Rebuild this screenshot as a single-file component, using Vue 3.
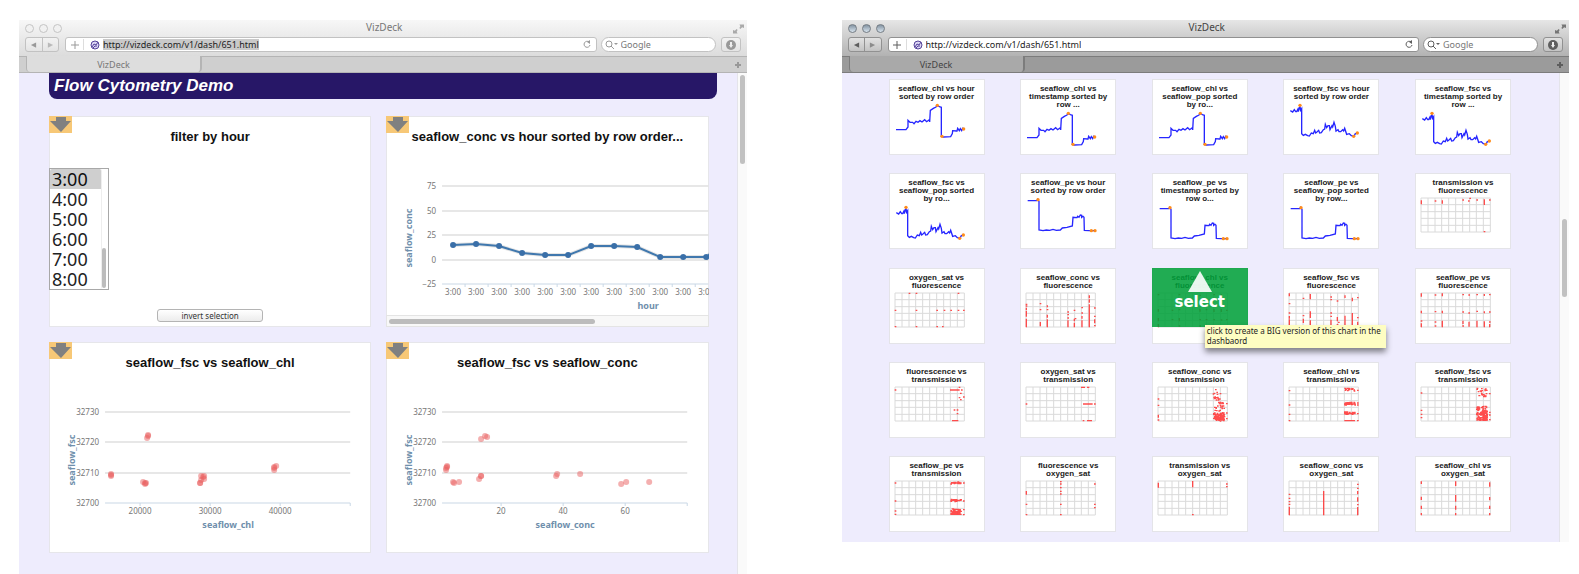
<script setup>
const url = 'http://vizdeck.com/v1/dash/651.html'
const windows = [
  { id: 'dash', focused: false },
  { id: 'gallery', focused: true },
]
const hours = ['3:00', '4:00', '5:00', '6:00', '7:00', '8:00']

const lineY = [89, 88, 90, 97, 99, 99, 90, 90, 91, 101, 101, 101]
const linePoints = lineY.map((y, i) => [67 + i * 23, y])
const linePath = linePoints.map((p) => p.join(',')).join(' ') + ' 326,96'
const lineTicks = [[75, 30], [50, 55], [25, 79], [0, 104], ['−25', 128]]

const scatterTicks = [[32730, 30], [32720, 60], [32710, 91], [32700, 121]]
const scatters = [
  {
    id: 'chl',
    x: 'seaflow_chl',
    ticks: [[91, '20000'], [161, '30000'], [231, '40000'], [301, '']],
    dots: [[99, 53], [99, 54], [98, 56], [62, 92], [62, 93], [62, 94], [94, 100], [97, 101], [96, 102], [96, 101], [151, 101], [151, 101], [152, 98], [152, 94], [155, 94], [154, 95], [155, 97], [225, 88], [225, 86], [225, 85], [227, 84]],
  },
  {
    id: 'conc',
    x: 'seaflow_conc',
    ticks: [[115, '20'], [177, '40'], [239, '60'], [301, '']],
    dots: [[95, 57], [99, 54], [101, 55], [61, 84], [61, 85], [60, 86], [60, 88], [67, 100], [68, 101], [73, 100], [93, 97], [95, 94], [95, 94], [170, 94], [171, 92], [194, 92], [235, 102], [240, 100], [263, 100]],
  },
]

const sparks = {
  chl: {
    line: '21,86 51,86 57,78 57,58 63,64 71,64 75,68 81,61 87,64 93,59 99,63 107,56 113,62 121,56 122,63 124,28 133,22 141,18 145,13 153,18 157,19 157,106 163,108 185,107 190,98 191,89 202,90 204,90 206,82 211,89 214,83 218,89 221,82 225,85',
    dots: [[145, 13], [159, 106], [224, 84]],
  },
  fsc: {
    line: '22,29 29,33 34,26 38,32 41,32 45,24 46,32 51,16 53,28 56,23 56,98 61,103 67,100 74,104 79,105 85,96 91,98 95,88 98,96 101,94 107,88 110,96 115,95 121,86 125,84 127,70 131,80 135,74 139,74 141,86 147,74 149,78 153,64 157,76 159,90 165,86 168,92 173,92 179,86 182,90 185,82 191,100 199,98 205,104 213,106 217,98 222,97',
    dots: [[51, 13], [212, 106], [223, 96]],
  },
  pe: {
    line: '23,17 51,17 53,13 57,19 57,105 69,107 79,105 89,106 99,103 109,106 121,105 127,99 141,97 157,93 159,67 171,68 173,64 177,67 181,60 185,61 185,67 189,64 192,67 193,106 207,107 225,107',
    dots: [[54, 14], [214, 107], [225, 107]],
  },
}

/* Deterministic scatter of short marks inside a box. */
function cloud(x0, x1, y0, y1, count, seed) {
  let s = seed
  const next = () => {
    s = (s * 16807) % 2147483647
    return s / 2147483647
  }
  let d = ''
  for (let i = 0; i < count; i++) {
    d += `M${Math.round(x0 + next() * (x1 - x0))} ${Math.round(y0 + next() * (y1 - y0))}h1`
  }
  return d
}

/* Each column is [x, y or [from, to], ...]. */
function marks(...columns) {
  return columns
    .map(([x, ...ys]) => ys.map((y) => (Array.isArray(y) ? `M${x} ${y[0]}V${y[1]}` : `M${x} ${y}h1`)).join(''))
    .join('')
}

const thumbs = [
  { title: 'seaflow_chl vs hour sorted by row order', spark: sparks.chl },
  { title: 'seaflow_chl vs timestamp sorted by row ...', spark: sparks.chl },
  { title: 'seaflow_chl vs seaflow_pop sorted by ro...', spark: sparks.chl },
  { title: 'seaflow_fsc vs hour sorted by row order', spark: sparks.fsc },
  { title: 'seaflow_fsc vs timestamp sorted by row ...', spark: sparks.fsc },
  { title: 'seaflow_fsc vs seaflow_pop sorted by ro...', spark: sparks.fsc },
  { title: 'seaflow_pe vs hour sorted by row order', spark: sparks.pe },
  { title: 'seaflow_pe vs timestamp sorted by row o...', spark: sparks.pe },
  { title: 'seaflow_pe vs seaflow_pop sorted by row...', spark: sparks.pe },
  { title: 'transmission vs fluorescence', marks: marks([1, [9, 17]], [43, 9], [64, [9, 15]], [126, 6], [143, 9], [147, 1], [168, 6], [190, [6, 19], 101], [206, 6]) },
  { title: 'oxygen_sat vs fluorescence', marks: marks([1, 52, 101], [43, 1], [64, 1, 52, 101], [126, 52, 101], [143, 101], [148, 52], [168, 52], [190, 1, 52], [206, 52]) },
  { title: 'seaflow_conc vs fluorescence', marks: marks([1, 34, 39, [46, 49], [55, 69], [79, 101]], [43, 32, 50, [89, 98]], [64, [39, 41], 50, [67, 72], [81, 101]], [126, 57, 65, 75, [84, 101]], [145, 52, [79, 83], [91, 101]], [148, 77], [168, 44, 60, [71, 75], [84, 101]], [190, [9, 14], [21, 27], [36, 101]], [206, 45, 70, [81, 89], 98]) },
  { title: 'seaflow_chl vs fluorescence', hover: true, marks: marks([1, 5, [50, 54], [77, 83], [95, 101]], [43, 52, 80], [64, 5, 50, [77, 83], 99], [126, 7, [50, 54], 80, 99], [145, 50, 80], [168, 5, [50, 55], 80, 99], [190, [5, 9], [50, 55], 81, 100], [206, 52, 80]) },
  { title: 'seaflow_fsc vs fluorescence', marks: marks([1, [3, 8], 32, 60, [71, 75], [81, 97]], [43, 16, 68, [79, 88]], [64, [5, 17], [57, 73], [84, 99]], [126, 12, 20, 60, 70, [82, 99]], [145, 24, [74, 83], 95], [149, 88], [168, [9, 13], [70, 99]], [190, [16, 23], [62, 99]], [206, 14, 74, [88, 94]]) },
  { title: 'seaflow_pe vs fluorescence', marks: marks([1, [3, 9], [55, 59], 84, [93, 101]], [43, 6, 56, 87, 99], [64, [3, 8], [55, 59], [85, 101]], [126, 5, 57, [85, 91], 99], [144, 6, 60, [88, 99]], [168, 5, 55, [85, 101]], [190, [5, 7], [57, 59], [87, 101]], [206, 5, 57, 87, [95, 101]]) },
  { title: 'fluorescence vs transmission', marks: marks([1, 9], [193, 1, 32], [197, 19, 38], [200, 9], [206, 30], [178, 69], [187, 69, 80]) + 'M167 9H192M173 101H188' },
  { title: 'oxygen_sat vs transmission', marks: marks([1, 51], [172, 101], [206, 51]) + 'M167 1H175M185 1H188M173 51H198M185 101H196' },
  { title: 'seaflow_conc vs transmission', marks: marks([1, 36, 55, [85, 90], 99], [206, 50, 78, 95]) + cloud(166, 190, 6, 40, 8, 11) + cloud(168, 198, 30, 80, 38, 23) + cloud(167, 199, 78, 102, 90, 5) },
  { title: 'seaflow_chl vs transmission', marks: marks([1, 11, 54, 82, 101], [206, 10, 48, 54, 80, 101]) + cloud(168, 198, 3, 13, 20, 8) + cloud(167, 198, 46, 55, 30, 4) + cloud(167, 198, 75, 82, 28, 3) + 'M168 51H196M168 80H198M168 101H196' },
  { title: 'seaflow_fsc vs transmission', marks: marks([1, 18, 70, 82, 92], [206, 20, 76, 84, 98]) + cloud(168, 200, 2, 30, 24, 9) + cloud(167, 198, 56, 100, 90, 12) + cloud(184, 198, 70, 101, 70, 32) },
  { title: 'seaflow_pe vs transmission', marks: marks([1, 6, 60, 90, 100], [206, 6, 60, 86, 101]) + cloud(168, 198, 3, 9, 24, 7) + cloud(168, 198, 55, 62, 20, 6) + cloud(168, 198, 84, 100, 60, 14) + 'M172 6H198M168 58H198M168 100H198' },
  { title: 'fluorescence vs oxygen_sat', marks: marks([1, [32, 39], 70, 101], [104, 2, 9, 20, 31, 39, 70, 101], [206, 9, 70, 80]) },
  { title: 'transmission vs oxygen_sat', marks: marks([1, [7, 18]], [104, [2, 17], 101], [206, 9, 17]) },
  { title: 'seaflow_conc vs oxygen_sat', marks: marks([1, 40, 52, 62, 70, [79, 101]], [104, [32, 101]], [206, 10, 22, [32, 38], [51, 60], 71, [80, 101]]) },
  { title: 'seaflow_chl vs oxygen_sat', marks: marks([1, [3, 7], [49, 55], [76, 82], [98, 101]], [104, [3, 13], [44, 60], [76, 84], [98, 101]], [206, [6, 15], [50, 56], [76, 82], [98, 101]]) },
]

const gridPath =
  Array.from({ length: 11 }, (_, i) => `M${Math.round(i * 20.8)} 0V102`).join('') +
  Array.from({ length: 6 }, (_, i) => `M0 ${Math.round(i * 20.4)}H208`).join('')
</script>

<template>
  <main class="page">
    <section v-for="w in windows" :key="w.id" class="window" :class="{ focused: w.focused }">
      <header class="chrome">
        <div class="titlebar">
          <div class="lights"><i></i><i></i><i></i></div>
          <span class="title">VizDeck</span>
          <svg class="expand" viewBox="0 0 12 10" aria-hidden="true">
            <path d="M7 0H12V4L10 3L8 5L7 4L8 2Z M5 10H0V6L2 7L4 5L5 6L4 8Z" />
          </svg>
        </div>
        <div class="toolbar">
          <div class="nav">
            <button type="button" aria-label="Back">
              <svg viewBox="0 0 8 8"><path d="M7 1V7L1 4Z" /></svg>
            </button>
            <button type="button" class="fwd" aria-label="Forward">
              <svg viewBox="0 0 8 8"><path d="M1 1V7L7 4Z" /></svg>
            </button>
          </div>
          <div class="address">
            <button type="button" class="plus" aria-label="Add bookmark">
              <svg viewBox="0 0 8 8"><path d="M4 0V8M0 4H8" /></svg>
            </button>
            <svg class="favicon" viewBox="0 0 10 10" aria-hidden="true">
              <circle cx="5" cy="5" r="4" />
              <path d="M2 7L4 4L6 5L8 2M3 8L5 6L7 6" />
            </svg>
            <input class="url" type="text" :value="url" aria-label="Address" />
            <button type="button" class="reload" aria-label="Reload">
              <svg viewBox="0 0 9 9"><path d="M6 2A3 3 0 1 0 7 5" /><path class="tip" d="M4 2L7 0V4Z" /></svg>
            </button>
          </div>
          <label class="search">
            <svg viewBox="0 0 14 10" aria-hidden="true">
              <circle cx="4" cy="4" r="3" /><path d="M6 6L9 9" /><path class="tip" d="M9 3H13L11 5Z" />
            </svg>
            <input type="text" placeholder="Google" aria-label="Search with Google" />
          </label>
          <button type="button" class="downloads" aria-label="Downloads">
            <svg viewBox="0 0 10 10"><circle cx="5" cy="5" r="5" /><path d="M4 2H6V5H7L5 8L3 5H4Z" /></svg>
          </button>
        </div>
        <div class="tabs">
          <span class="edge"></span>
          <button type="button" class="tab">VizDeck</button>
          <span class="rest"></span>
          <button type="button" class="add" aria-label="New tab">
            <svg viewBox="0 0 6 6"><path d="M3 0V6M0 3H6" /></svg>
          </button>
        </div>
      </header>

      <div class="viewport">
        <div v-if="w.id === 'dash'" class="dash">
          <h1>Flow Cytometry Demo</h1>
          <div class="cards">
            <article class="card">
              <button type="button" class="drop" aria-label="Send chart down">
                <svg viewBox="0 0 23 16"><path d="M7 0H17V4H22L12 15L1 4H7Z" /></svg>
              </button>
              <h2>filter by hour</h2>
              <div class="picker">
                <select size="6" aria-label="hour">
                  <option v-for="h in hours" :key="h" :class="{ on: h === '3:00' }">{{ h }}</option>
                </select>
                <span class="picker-bar"></span>
              </div>
              <button type="button" class="invert">invert selection</button>
            </article>

            <article class="card">
              <button type="button" class="drop" aria-label="Send chart down">
                <svg viewBox="0 0 23 16"><path d="M7 0H17V4H22L12 15L1 4H7Z" /></svg>
              </button>
              <h2>seaflow_conc vs hour sorted by row order...</h2>
              <svg class="chart" viewBox="0 0 322 159">
                <g v-for="t in lineTicks" :key="t[0]">
                  <line x1="56" x2="322" :y1="t[1]" :y2="t[1]" :class="t[1] === 128 ? 'axis' : 'rule'" />
                  <text x="50" :y="t[1] + 3" text-anchor="end">{{ t[0] }}</text>
                </g>
                <polyline class="shade" :points="linePath" />
                <polyline class="series" :points="linePath" />
                <g v-for="(p, i) in linePoints" :key="i">
                  <circle class="knot" :cx="p[0]" :cy="p[1]" r="3" />
                  <line class="axis" :x1="p[0] + 12" :x2="p[0] + 12" y1="128" y2="131" />
                  <text :x="p[0]" y="139" text-anchor="middle">3:00</text>
                </g>
                <text class="name" x="262" y="153" text-anchor="middle">hour</text>
                <text class="name" transform="translate(26 82) rotate(-90)" text-anchor="middle">seaflow_conc</text>
              </svg>
              <div class="hbar"><span></span></div>
            </article>

            <article v-for="s in scatters" :key="s.id" class="card">
              <button type="button" class="drop" aria-label="Send chart down">
                <svg viewBox="0 0 23 16"><path d="M7 0H17V4H22L12 15L1 4H7Z" /></svg>
              </button>
              <h2>seaflow_fsc vs {{ s.x }}</h2>
              <svg class="chart" viewBox="0 0 322 159">
                <text class="name" transform="translate(26 78) rotate(-90)" text-anchor="middle">seaflow_fsc</text>
                <g v-for="t in scatterTicks" :key="t[0]">
                  <line x1="56" x2="301" :y1="t[1]" :y2="t[1]" :class="t[1] === 121 ? 'axis' : 'rule'" />
                  <text x="50" :y="t[1] + 3" text-anchor="end">{{ t[0] }}</text>
                </g>
                <g v-for="t in s.ticks" :key="t[0]">
                  <line class="axis" :x1="t[0]" :x2="t[0]" y1="121" y2="124" />
                  <text :x="t[0]" y="132" text-anchor="middle">{{ t[1] }}</text>
                </g>
                <circle v-for="(d, i) in s.dots" :key="i" class="dot" :cx="d[0]" :cy="d[1]" r="3" />
                <text class="name" x="179" y="146" text-anchor="middle">{{ s.x }}</text>
              </svg>
            </article>
          </div>
        </div>

        <div v-else class="gallery">
          <article v-for="t in thumbs" :key="t.title" class="thumb" :class="{ hover: t.hover }">
            <h3>{{ t.title }}</h3>
            <svg viewBox="0 0 288 126">
              <g v-if="t.spark">
                <polyline class="spark" :points="t.spark.line" />
                <circle v-for="(d, i) in t.spark.dots" :key="i" class="peak" :cx="d[0]" :cy="d[1]" r="5" />
              </g>
              <g v-else transform="translate(18 9)">
                <path class="grid" :d="gridPath" />
                <path class="marks" :d="t.marks" />
              </g>
            </svg>
            <template v-if="t.hover">
              <button type="button" class="select">
                <svg viewBox="0 0 24 21" aria-hidden="true"><path d="M12 0L24 21H0Z" /></svg>
                select
              </button>
              <p class="tip-box" role="tooltip">click to create a BIG version of this chart in the dashbaord</p>
            </template>
          </article>
        </div>
        <div class="vbar"><span></span></div>
      </div>
    </section>
  </main>
</template>

<style>
body {
  background: #fff;
}
</style>

<style scoped>
.page {
  box-sizing: border-box;
  min-height: 100vh;
  display: grid;
  grid-template-columns: 1fr 1fr;
  column-gap: 95px;
  padding: 20px 10px 0 19px;
  font-family: "Noto Sans", "DejaVu Sans", sans-serif;
}
.page * {
  box-sizing: border-box;
}
button,
input,
select {
  margin: 0;
  padding: 0;
  border: 0;
  background: none;
  font: inherit;
  color: inherit;
  outline: 0;
}
h1,
h2,
h3,
p {
  margin: 0;
}
.window {
  --bar-top: #f7f7f7;
  --bar-end: #dcdcdc;
  --strip: #cfcfcf;
  --strip-line: #b4b4b4;
  --tab: #dddddd;
  --glyph: #999;
  --label: #777;
  --edge: #c2c2c2;
  display: flex;
  flex-direction: column;
  min-width: 0;
}
.window.focused {
  --bar-top: #e6e6e6;
  --bar-end: #b2b2b2;
  --strip: #9b9b9b;
  --strip-line: #7c7c7c;
  --tab: #a9a9a9;
  --glyph: #5e5e5e;
  --label: #444;
  --edge: #919191;
  margin-bottom: 32px;
}
.chrome {
  background: linear-gradient(var(--bar-top), var(--bar-end) 36px);
}
.titlebar {
  display: grid;
  grid-template-columns: 1fr auto 1fr;
  align-items: center;
  height: 17px;
  padding: 0 3px 0 6px;
  font-size: 10px;
  line-height: 15px;
  color: var(--label);
}
.title {
  height: 17px;
}
.lights {
  display: flex;
  gap: 5px;
}
.lights i {
  width: 9px;
  height: 9px;
  border: 1px solid #c4c4c4;
  border-radius: 50%;
  background: #f1f1f1;
}
.focused .lights i {
  border-color: #747c84;
  background: linear-gradient(#8393a2, #d8e4ee);
}
.expand {
  justify-self: end;
  width: 11px;
  height: 10px;
  fill: var(--glyph);
  opacity: 0.8;
}
.toolbar {
  display: flex;
  height: 19px;
  padding: 0 6px 4px;
}
.nav {
  display: flex;
  width: 34px;
  margin-right: 6px;
  border: 1px solid var(--edge);
  border-radius: 3px;
  background: linear-gradient(#fff6, #fff2);
}
.nav button {
  flex: 1;
  display: grid;
  place-items: center;
}
.nav .fwd {
  border-left: 1px solid var(--edge);
}
.nav svg {
  width: 7px;
  height: 8px;
  fill: var(--glyph);
}
.nav .fwd svg {
  opacity: 0.6;
}
.address {
  flex: 1;
  display: flex;
  align-items: center;
  min-width: 0;
  margin-right: 4px;
  border: 1px solid var(--edge);
  border-radius: 3px;
  background: #fff;
}
.plus {
  display: grid;
  place-items: center;
  width: 18px;
  height: 11px;
  border-right: 1px solid #ddd;
}
.plus svg {
  width: 8px;
  height: 8px;
  stroke: var(--glyph);
}
.favicon {
  width: 10px;
  height: 10px;
  margin: 0 3px 0 6px;
}
.favicon circle {
  fill: #dcd6f4;
  stroke: #54429a;
}
.favicon path {
  fill: none;
  stroke: #54429a;
}
.url {
  field-sizing: content;
  height: 11px;
  font-size: 9px;
  line-height: 11px;
  color: #222;
  background: #c9c9c9;
}
.focused .url {
  background: none;
}
.reload {
  width: 9px;
  height: 9px;
  margin: 0 4px 0 auto;
}
.reload svg {
  display: block;
  fill: none;
  stroke: var(--glyph);
}
.reload .tip,
.search .tip {
  fill: var(--glyph);
  stroke: none;
}
.search {
  display: flex;
  align-items: center;
  width: 115px;
  margin-right: 5px;
  padding-left: 3px;
  border: 1px solid var(--edge);
  border-radius: 8px;
  background: #fff;
}
.search svg {
  flex: none;
  width: 14px;
  height: 10px;
  fill: none;
  stroke: var(--glyph);
}
.search input {
  min-width: 0;
  height: 13px;
  padding-left: 2px;
  font-size: 9px;
}
.search input::placeholder {
  color: #777;
}
.downloads {
  display: grid;
  place-items: center;
  width: 20px;
  border: 1px solid var(--edge);
  border-radius: 3px;
  background: linear-gradient(#fff6, #fff2);
}
.downloads svg {
  width: 10px;
  height: 10px;
}
.downloads circle {
  fill: var(--glyph);
}
.downloads path {
  fill: #eee;
}
.tabs {
  display: flex;
  height: 17px;
  border-top: 1px solid var(--strip-line);
  border-bottom: 1px solid var(--strip-line);
  background: var(--strip);
}
.edge {
  width: 7px;
}
.tab {
  width: 176px;
  margin-top: -1px;
  border: 1px solid var(--strip-line);
  border-width: 0 2px 0 1px;
  border-radius: 0 0 4px 4px;
  background: var(--tab);
  font-size: 9px;
  line-height: 15px;
  color: var(--label);
}
.rest {
  flex: 1;
}
.add {
  display: grid;
  place-items: center;
  width: 18px;
}
.add svg {
  width: 6px;
  height: 6px;
  stroke: var(--glyph);
  stroke-width: 2;
}
.viewport {
  flex: 1;
  display: flex;
  background: #eeecfd;
}
.vbar {
  width: 10px;
  padding: 2px 2px 0;
  border-left: 1px solid #e4e4ea;
  background: #fafafa;
}
.vbar span {
  display: block;
  height: 89px;
  border-radius: 3px;
  background: #c1c1c1;
}
.focused .vbar {
  padding-top: 146px;
}
.focused .vbar span {
  height: 78px;
}

.dash {
  flex: 1;
  min-width: 0;
  padding: 0 20px 21px 30px;
}
.dash h1 {
  height: 26px;
  padding-left: 5px;
  border-radius: 0 0 8px 8px;
  background: #271767;
  color: #fff;
  font: italic bold 17px/26px "Liberation Sans", Arial, sans-serif;
}
.cards {
  display: grid;
  grid-template-columns: 1fr 1fr;
  gap: 15px;
  padding: 17px 8px 0 0;
}
.card {
  position: relative;
  display: flex;
  flex-direction: column;
  min-width: 0;
  min-height: 211px;
  background: #fff;
  box-shadow: inset 0 0 0 1px #e6e6ea;
}
.card h2 {
  padding: 13px 0 11px;
  text-align: center;
  color: #111;
  font: bold 13px/16px "Liberation Sans", Arial, sans-serif;
}
.drop {
  position: absolute;
  top: 0;
  left: 0;
  width: 23px;
  height: 17px;
  background: #f7c877;
}
.drop svg {
  display: block;
  width: 23px;
  height: 16px;
  fill: #808080;
}
.picker {
  position: relative;
  width: 60px;
  margin-top: 12px;
  border: 1px solid #a8a8a8;
  background: #fff;
}
.picker select {
  display: block;
  width: 52px;
  height: 120px;
  overflow: hidden;
  border-right: 1px solid #eee;
  font-size: 18px;
  color: #222;
}
.picker option {
  display: flex;
  align-items: center;
  height: 20px;
  min-height: 20px;
  padding: 0 2px;
  line-height: 20px;
}
.picker .on {
  background: #cfcfcf;
}
.picker-bar {
  position: absolute;
  right: 2px;
  bottom: 1px;
  width: 4px;
  height: 40px;
  border-radius: 2px;
  background: #bcbcbc;
}
.invert {
  align-self: center;
  width: 106px;
  height: 13px;
  margin: auto 0 5px;
  border: 1px solid #b4b4b4;
  border-radius: 3px;
  background: linear-gradient(#fff, #ececec);
  font-size: 8px;
  line-height: 11px;
  color: #333;
}
.chart {
  display: block;
  width: 100%;
  font-size: 8px;
  fill: #777;
}
.chart .rule {
  stroke: #cfcfcf;
}
.chart .axis {
  stroke: #c9d8e6;
}
.chart .series {
  fill: none;
  stroke: #4078ae;
  stroke-width: 2;
}
.chart .shade {
  fill: none;
  stroke: #0000001a;
  stroke-width: 4;
}
.chart .knot {
  fill: #3a6fa8;
}
.chart .dot {
  fill: #e95f5f;
  fill-opacity: 0.5;
}
.chart .name {
  font-size: 9px;
  font-weight: bold;
  fill: #6f8fac;
}
.hbar {
  height: 12px;
  margin-top: auto;
  padding: 3px 2px;
  border: 1px solid #e4e4e4;
  background: #f8f8f8;
}
.hbar span {
  display: block;
  width: 65%;
  height: 5px;
  border-radius: 3px;
  background: #bcbcbc;
}

.gallery {
  flex: 1;
  display: grid;
  grid-template-columns: repeat(5, 96px);
  grid-auto-rows: 76px;
  justify-content: space-between;
  align-content: space-between;
  padding: 6px 48px 10px 47px;
}
.thumb {
  position: relative;
  padding-top: 6px;
  background: #fff;
  box-shadow: inset 0 0 0 1px #e4e4e8;
}
.thumb h3 {
  padding: 0 7px;
  text-align: center;
  color: #1a1a1a;
  font: bold 8px/8px "Liberation Sans", Arial, sans-serif;
}
.thumb > svg {
  display: block;
  width: 96px;
  height: 42px;
}
.spark {
  fill: none;
  stroke: #2626ff;
  stroke-width: 4;
}
.peak {
  fill: #ff8c1a;
}
.grid {
  fill: none;
  stroke: #dadada;
  stroke-width: 3;
}
.marks {
  fill: none;
  stroke: #ff3a3a;
  stroke-opacity: 0.9;
  stroke-width: 4;
  stroke-linecap: square;
}
.select {
  position: absolute;
  inset: 0 0 17px;
  display: flex;
  flex-direction: column;
  align-items: center;
  padding-top: 3px;
  background: rgb(0 160 58 / 0.87);
  color: #fff;
  font: bold 15px/20px "DejaVu Sans", sans-serif;
}
.select svg {
  width: 24px;
  height: 21px;
  fill: #fff;
  fill-opacity: 0.9;
}
.tip-box {
  position: absolute;
  z-index: 2;
  top: 57px;
  left: 53px;
  width: 181px;
  padding: 1px 2px 2px;
  background: #fefdc2;
  box-shadow: 0 4px 6px #0007;
  color: #222;
  font-size: 8px;
  line-height: 10px;
}
</style>
